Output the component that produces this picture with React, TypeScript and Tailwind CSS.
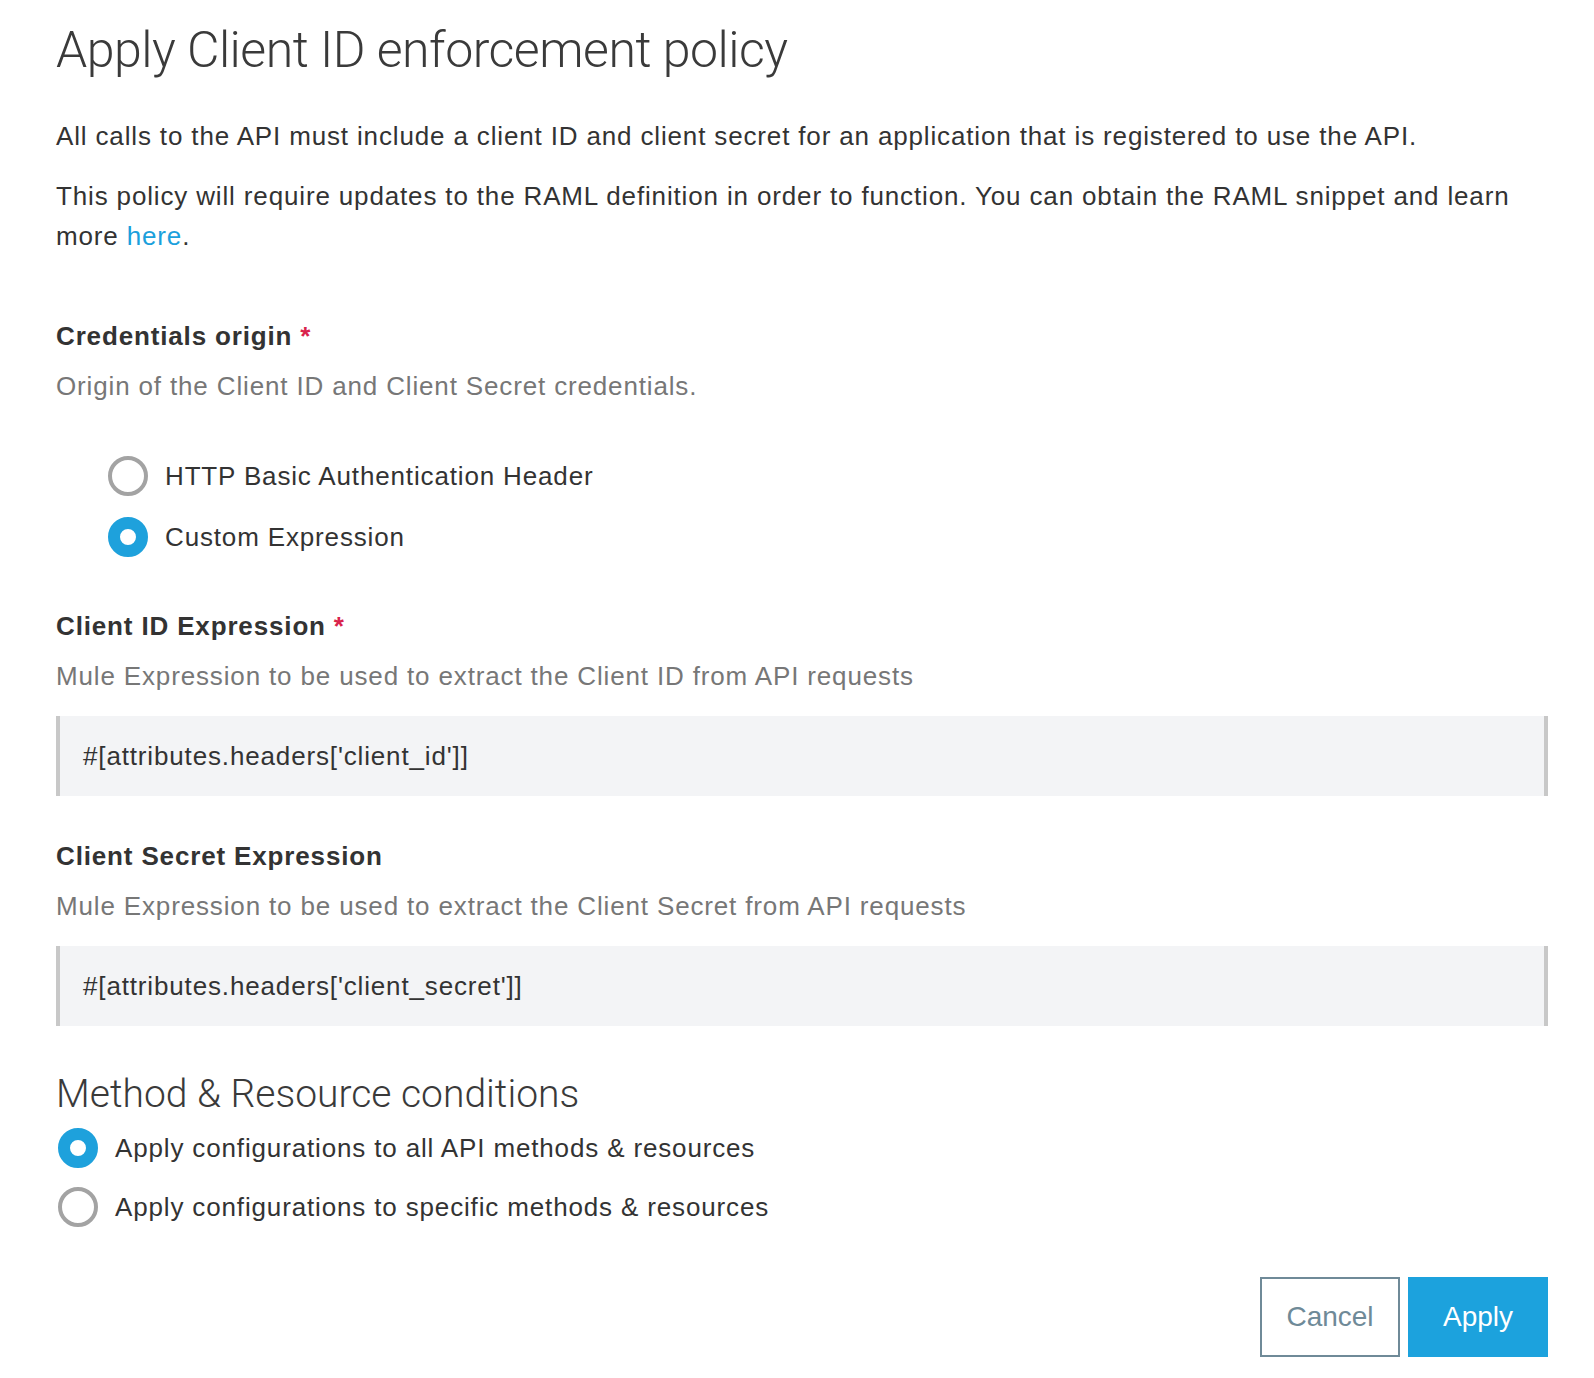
import { useState } from "react";

const sans = "font-['Liberation_Sans',Arial,sans-serif]";
const din = "font-['Roboto',sans-serif]";

function Radio({ checked, label, onClick }: { checked: boolean; label: string; onClick: () => void }) {
  return (
    <button type="button" onClick={onClick} className="flex h-[40px] items-center gap-[17px] text-left">
      {checked ? (
        <span className="box-border block h-[40px] w-[40px] rounded-full border-[12px] border-[#1ea1dc] bg-white" />
      ) : (
        <span className="box-border block h-[40px] w-[40px] rounded-full border-[4px] border-[#a3a3a3] bg-white" />
      )}
      <span className="text-[26px] leading-[40px] tracking-[0.85px] text-[#333]">{label}</span>
    </button>
  );
}

function Field({ label, required, hint, value }: { label: string; required?: boolean; hint: string; value: string }) {
  return (
    <div className="flex flex-col">
      <div className="text-[26px] font-bold leading-[40px] tracking-[0.85px] text-[#333]">
        {label}
        {required && <span className="ml-[8px] text-[#d9234c]">*</span>}
      </div>
      <div className="mt-[10px] text-[26px] leading-[40px] tracking-[0.85px] text-[#777]">{hint}</div>
      <div className="mt-[20px] box-border flex h-[80px] items-center border-x-[4px] border-[#c8c8c8] bg-[#f3f4f6] pl-[23px] text-[26px] tracking-[0.85px] text-[#333]">
        {value}
      </div>
    </div>
  );
}

export default function App() {
  const [origin, setOrigin] = useState<"basic" | "custom">("custom");
  const [scope, setScope] = useState<"all" | "specific">("all");

  return (
    <div className={`min-h-[1378px] w-full bg-white ${sans}`}>
      <div className="flex w-[1548px] flex-col pl-[56px] pt-[20px]">
        <h1 className={`${din} text-[50px] font-light leading-[60px] tracking-[-0.5px] text-[#3a3a3a]`}>
          Apply Client ID enforcement policy
        </h1>

        <p className="mt-[36px] text-[26px] leading-[40px] tracking-[0.85px] text-[#333]">
          All calls to the API must include a client ID and client secret for an application that is registered to use the API.
        </p>
        <p className="mt-[20px] text-[26px] leading-[40px] tracking-[0.85px] text-[#333]">
          This policy will require updates to the RAML definition in order to function. You can obtain the RAML snippet and learn more{" "}
          <a href="#" className="text-[#1ba0dc]">here</a>.
        </p>

        {/* Credentials origin */}
        <div className="mt-[60px] text-[26px] font-bold leading-[40px] tracking-[0.85px] text-[#333]">
          Credentials origin<span className="ml-[8px] text-[#d9234c]">*</span>
        </div>
        <div className="mt-[10px] text-[26px] leading-[40px] tracking-[0.85px] text-[#777]">
          Origin of the Client ID and Client Secret credentials.
        </div>
        <div className="mt-[50px] flex flex-col gap-[21px] pl-[52px]">
          <Radio checked={origin === "basic"} label="HTTP Basic Authentication Header" onClick={() => setOrigin("basic")} />
          <Radio checked={origin === "custom"} label="Custom Expression" onClick={() => setOrigin("custom")} />
        </div>

        <div className="mt-[49px]">
          <Field
            label="Client ID Expression"
            required
            hint="Mule Expression to be used to extract the Client ID from API requests"
            value="#[attributes.headers['client_id']]"
          />
        </div>
        <div className="mt-[40px]">
          <Field
            label="Client Secret Expression"
            hint="Mule Expression to be used to extract the Client Secret from API requests"
            value="#[attributes.headers['client_secret']]"
          />
        </div>

        {/* Method & Resource conditions */}
        <h2 className={`${din} mt-[45px] text-[39px] font-light leading-[46px] text-[#3a3a3a]`}>
          Method &amp; Resource conditions
        </h2>
        <div className="mt-[11px] flex flex-col gap-[19px] pl-[2px]">
          <Radio checked={scope === "all"} label="Apply configurations to all API methods & resources" onClick={() => setScope("all")} />
          <Radio checked={scope === "specific"} label="Apply configurations to specific methods & resources" onClick={() => setScope("specific")} />
        </div>

        <div className="mt-[50px] flex justify-end gap-[8px]">
          <button className="box-border h-[80px] w-[140px] border-2 border-[#6f8a98] bg-white text-[28px] text-[#6f8a98]">
            Cancel
          </button>
          <button className="h-[80px] w-[140px] bg-[#1ca2dd] text-[28px] text-white">Apply</button>
        </div>
      </div>
    </div>
  );
}
